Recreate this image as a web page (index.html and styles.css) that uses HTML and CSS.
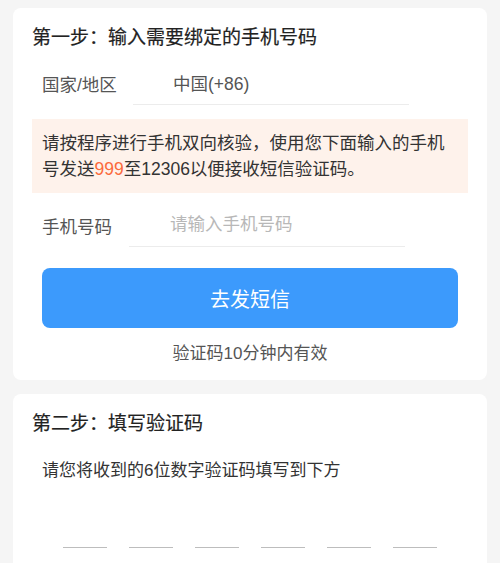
FILE: index.html
```html
<!DOCTYPE html>
<html lang="zh-CN">

<head>
    <meta charset="UTF-8">
    <meta name="viewport" content="width=device-width, initial-scale=1.0">
    <title>绑定手机号</title>
    <link rel="stylesheet" href="styles.css">
</head>

<body>
    <div class="card step-one">
        <h2 class="card-title">第一步：输入需要绑定的手机号码</h2>

        <div class="field field-country">
            <label class="field-label">国家/地区</label>
            <div class="field-value">中国(+86)</div>
        </div>

        <div class="notice">
            请按程序进行手机双向核验，使用您下面输入的手机号发送<span class="highlight">999</span>至12306以便接收短信验证码。
        </div>

        <div class="field field-phone">
            <label class="field-label" for="phone">手机号码</label>
            <input class="field-value" type="tel" id="phone" name="phone" placeholder="请输入手机号码">
        </div>

        <button class="send-btn" type="button">去发短信</button>
        <p class="hint">验证码10分钟内有效</p>
    </div>

    <div class="card step-two">
        <h2 class="card-title">第二步：填写验证码</h2>
        <p class="desc">请您将收到的6位数字验证码填写到下方</p>
        <div class="code-boxes">
            <input class="code" type="text" maxlength="1">
            <input class="code" type="text" maxlength="1">
            <input class="code" type="text" maxlength="1">
            <input class="code" type="text" maxlength="1">
            <input class="code" type="text" maxlength="1">
            <input class="code" type="text" maxlength="1">
        </div>
    </div>
</body>

</html>
```

FILE: styles.css
```css
body {
    font-family: "Liberation Sans", "Noto Sans CJK SC", sans-serif;
    background-color: #f5f5f5;
    margin: 0;
    padding: 8px 13px;
    color: #333;
}

.card {
    background-color: white;
    border-radius: 8px;
    padding: 18px 19px 14px;
}

.step-two {
    margin-top: 14px;
    height: 200px;
}

.card-title {
    margin: 0;
    font-size: 19px;
    font-weight: normal;
    line-height: 24px;
    color: #222;
    -webkit-text-stroke: 0.2px #222;
}

.field {
    display: flex;
    align-items: stretch;
    height: 44px;
    padding-left: 10px;
}

.field-country {
    margin-top: 11px;
    margin-bottom: 14px;
}

.field-phone {
    margin-top: 10px;
}

.field-label {
    width: 91px;
    flex-shrink: 0;
    display: flex;
    align-items: center;
    font-size: 17.5px;
    color: #555;
}

.field-phone .field-label {
    width: 87px;
}

.field-value {
    width: 276px;
    box-sizing: border-box;
    padding: 0 0 0 40px;
    display: flex;
    align-items: center;
    font-family: inherit;
    font-size: 17.5px;
    color: #555;
    border: none;
    border-bottom: 1px solid #ececec;
    outline: none;
    background: none;
}

.field-phone .field-value {
    padding-left: 41px;
}

.field-value::placeholder {
    color: #b8b8b8;
}

.notice {
    background-color: #fef2eb;
    padding: 11px 10px;
    font-size: 17.5px;
    line-height: 26px;
    color: #333;
}

.highlight {
    color: #fb6a3c;
}

.send-btn {
    display: block;
    width: 416px;
    height: 60px;
    margin: 21px 10px 0;
    border: none;
    border-radius: 8px;
    background-color: #3c9afc;
    color: white;
    font-family: inherit;
    font-size: 20px;
    cursor: pointer;
}

.hint {
    margin: 14px 0 0;
    text-align: center;
    font-size: 17px;
    line-height: 24px;
    color: #555;
}

.desc {
    margin: 23px 0 0 10px;
    font-size: 17px;
    line-height: 24px;
    color: #333;
}

.code-boxes {
    display: flex;
    justify-content: center;
    gap: 22px;
    margin-top: 40px;
}

.code {
    width: 44px;
    height: 24px;
    padding: 0;
    border: none;
    border-bottom: 1px solid #bdbdbd;
    outline: none;
    text-align: center;
    font-size: 20px;
    background: none;
}
```
